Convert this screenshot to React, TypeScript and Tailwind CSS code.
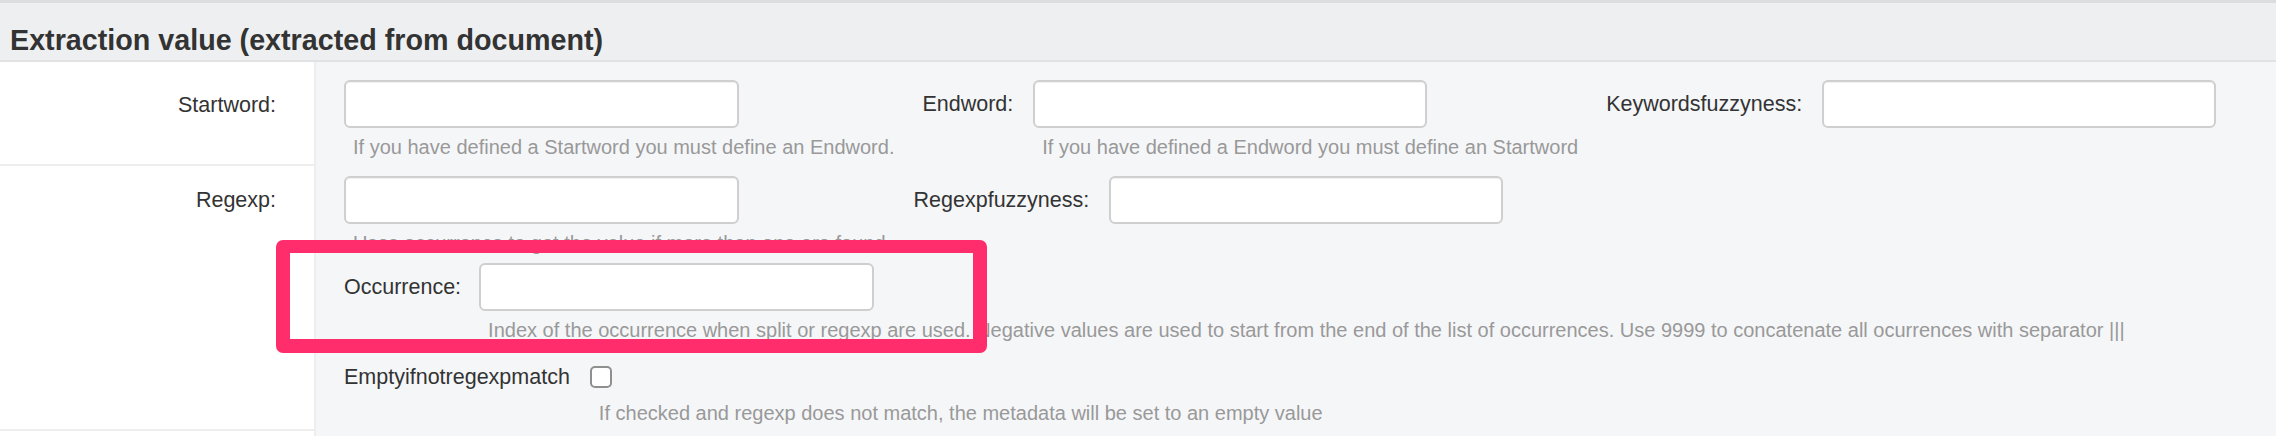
import React from "react";

const font = { fontFamily: '"Liberation Sans", Arial, Helvetica, sans-serif' };

function Control({ help, wide }: { help: string; wide?: boolean }) {
  return (
    <div className="flex flex-col items-start">
      <input
        type="text"
        className={`h-[48px] ${wide ? "w-[395px]" : "w-[394px]"} rounded-[6px] border-2 border-[#cfcfcf] bg-white shadow-[inset_0_1px_1px_rgba(0,0,0,0.06)] outline-none`}
      />
      <p className="mt-[5px] whitespace-nowrap pl-[9px] text-[20px] leading-[28px] text-[#999999]">
        {help}
      </p>
    </div>
  );
}

function Group({ label, help }: { label: string; help: string }) {
  return (
    <div className="flex items-start gap-[20px]">
      <label className="whitespace-nowrap text-[21.5px] leading-[48px] text-[#333333]">
        {label}
      </label>
      <Control help={help} />
    </div>
  );
}

export default function App() {
  return (
    <div className="relative h-[436px] w-full overflow-hidden bg-[#f5f6f8]" style={font}>
      {/* HEADER */}
      <div className="h-[62px] border-t-[3px] border-b-2 border-t-[#dcdddf] border-b-[#e1e2e4] bg-[#eeeff1] pl-[10px] pt-[23px]">
        <h2 className="text-[28.7px] font-bold leading-[28px] text-[#333333]">
          Extraction value (extracted from document)
        </h2>
      </div>

      {/* STARTWORD ROW */}
      <div className="flex">
        <div className="w-[316px] shrink-0 border-r-2 border-b-2 border-[#eeeeee] bg-white pr-[38px] pt-[19px] text-right">
          <span className="text-[21.5px] leading-[48px] text-[#333333]">Startword:</span>
        </div>
        <div className="flex flex-1 items-start gap-[28px] pl-[28px] pt-[18px] pb-[5px]">
          <Control wide help="If you have defined a Startword you must define an Endword." />
          <Group label="Endword:" help="If you have defined a Endword you must define an Startword" />
          <Group label="Keywordsfuzzyness:" help="" />
        </div>
      </div>

      {/* REGEXP ROW */}
      <div className="flex">
        <div className="w-[316px] shrink-0 border-r-2 border-b-2 border-[#eeeeee] bg-white pr-[38px] pt-[10px] text-right">
          <span className="text-[21.5px] leading-[48px] text-[#333333]">Regexp:</span>
        </div>
        <div className="flex flex-1 flex-col pl-[28px] pt-[10px] pb-[4px]">
          <div className="flex items-start gap-[28px]">
            <Control wide help="Uses occurrence to get the value if more than one are found" />
            <Group label="Regexpfuzzyness:" help="" />
          </div>

          <div className="mt-[6px] flex items-start gap-[18px]">
            <label className="text-[21.5px] leading-[48px] text-[#333333]">Occurrence:</label>
            <div className="flex flex-col items-start">
              <input
                type="text"
                className="h-[48px] w-[395px] rounded-[6px] border-2 border-[#cfcfcf] bg-white outline-none"
              />
              <p className="mt-[5px] whitespace-nowrap pl-[9px] text-[20px] leading-[28px] text-[#999999]">
                Index of the occurrence when split or regexp are used. Negative values are used to start from the end of the list of occurrences. Use 9999 to concatenate all ocurrences with separator |||
              </p>
            </div>
          </div>

          <div className="mt-[17px] flex items-start gap-[20px]">
            <label className="text-[21.5px] leading-[32px] text-[#333333]">Emptyifnotregexpmatch</label>
            <div className="flex flex-col items-start">
              <div className="flex h-[32px] items-center">
                <span className="block h-[22px] w-[22px] rounded-[5px] border-2 border-[#8f8f8f] bg-white" />
              </div>
              <p className="mt-[6px] whitespace-nowrap pl-[9px] text-[20px] leading-[28px] text-[#999999]">
                If checked and regexp does not match, the metadata will be set to an empty value
              </p>
            </div>
          </div>
        </div>
      </div>

      {/* NEXT ROW (cut off) */}
      <div className="flex h-[60px]">
        <div className="w-[316px] shrink-0 border-r-2 border-[#eeeeee] bg-white" />
        <div className="flex-1" />
      </div>

      {/* ANNOTATION BOX */}
      <div className="pointer-events-none absolute left-[276px] top-[240px] h-[113px] w-[711px] rounded-[7px] border-[14px] border-t-[13px] border-[#ff2d6c]" />
    </div>
  );
}
